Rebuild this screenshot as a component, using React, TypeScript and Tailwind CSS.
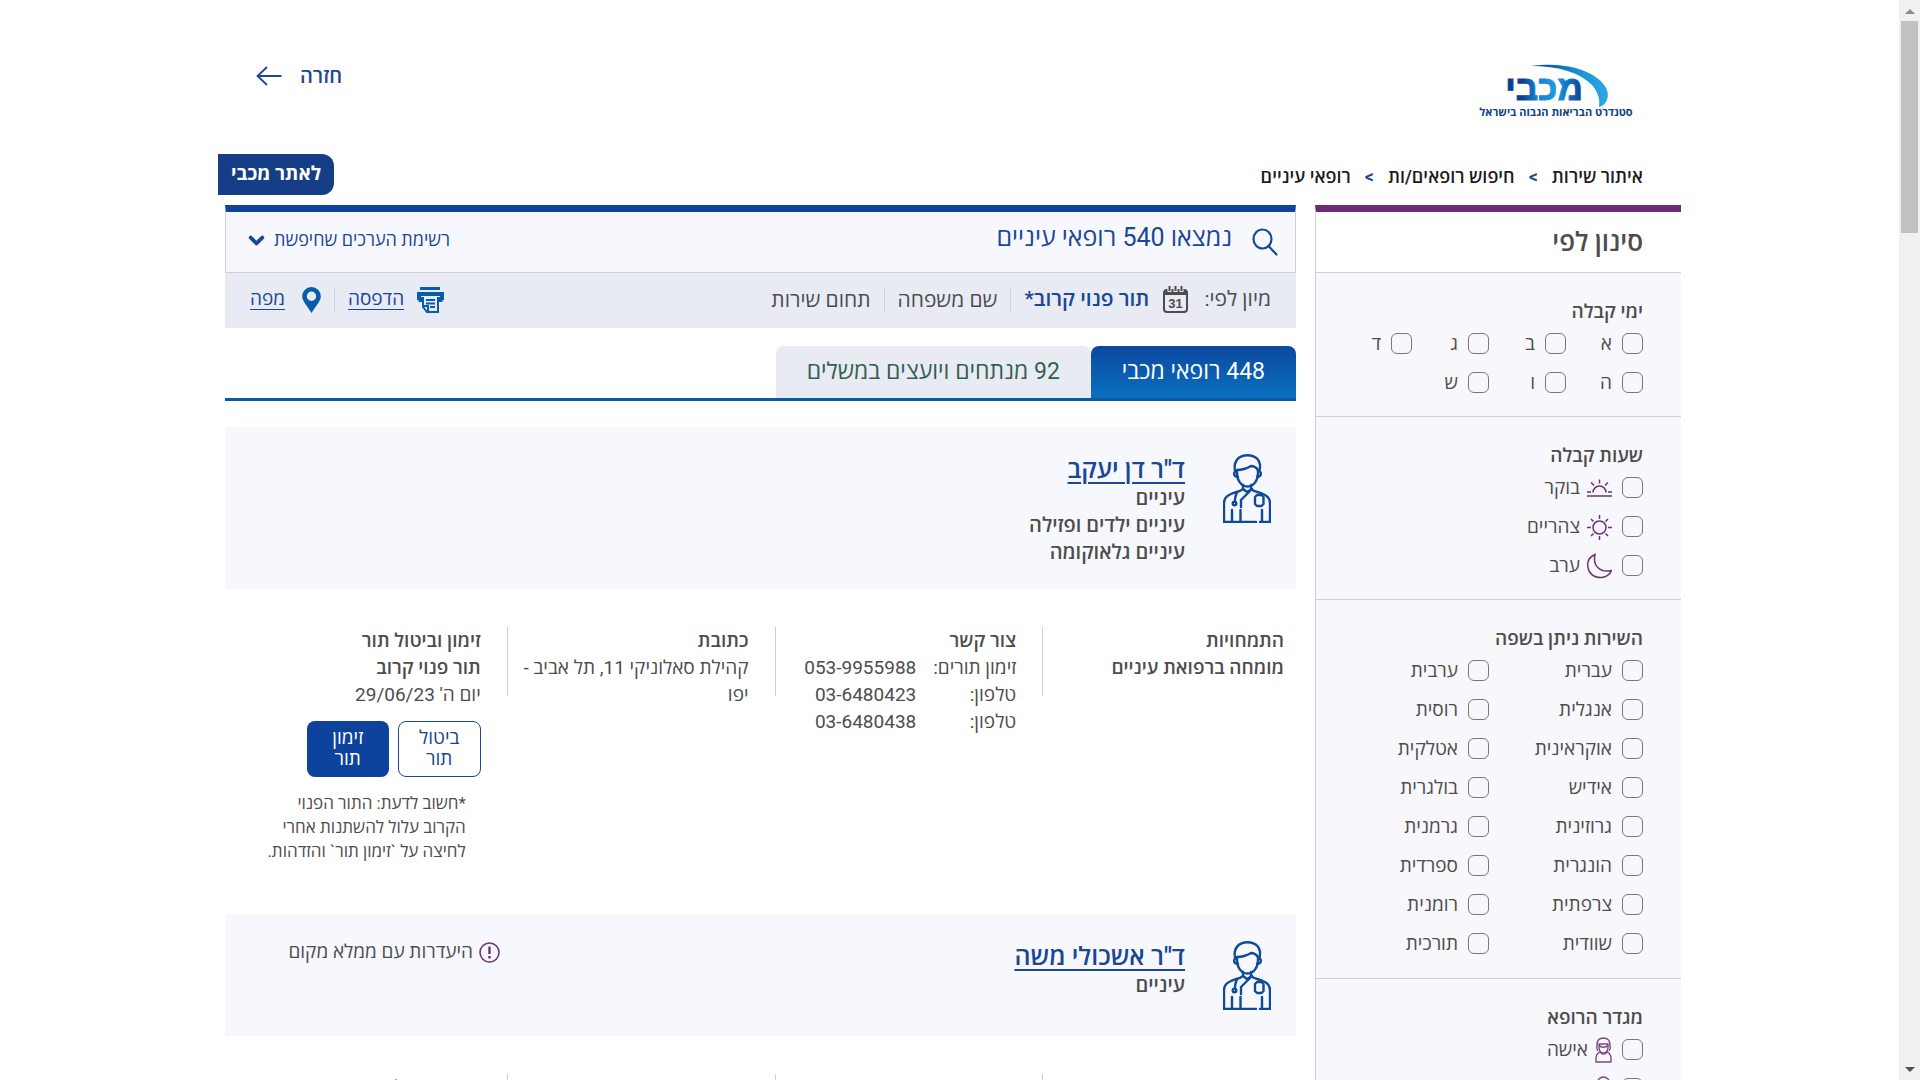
import { ChevronDown } from "lucide-react";
import type { ReactNode } from "react";

interface Doctor {
  name: string;
  fields: string[];
  absence?: string;
  expertise: string;
  phones: { label: string; number: string }[];
  address: string;
  nextDate: string;
}

const days = ["א", "ב", "ג", "ד", "ה", "ו", "ש"];

const languages = [
  "עברית",
  "ערבית",
  "אנגלית",
  "רוסית",
  "אוקראינית",
  "אטלקית",
  "אידיש",
  "בולגרית",
  "גרוזינית",
  "גרמנית",
  "הונגרית",
  "ספרדית",
  "צרפתית",
  "רומנית",
  "שוודית",
  "תורכית",
];

const doctors: Doctor[] = [
  {
    name: 'ד"ר דן יעקב',
    fields: ["עיניים", "עיניים ילדים ופזילה", "עיניים גלאוקומה"],
    expertise: "מומחה ברפואת עיניים",
    phones: [
      { label: "זימון תורים:", number: "053-9955988" },
      { label: "טלפון:", number: "03-6480423" },
      { label: "טלפון:", number: "03-6480438" },
    ],
    address: "קהילת סאלוניקי 11, תל אביב - יפו",
    nextDate: "יום ה' 29/06/23",
  },
  {
    name: 'ד"ר אשכולי משה',
    fields: ["עיניים"],
    absence: "היעדרות עם ממלא מקום",
    expertise: "מומחה ברפואת עיניים",
    phones: [{ label: "טלפון:", number: "03-6480423" }],
    address: "תל אביב - יפו",
    nextDate: "יום ה' 29/06/23",
  },
];

function Logo() {
  return (
    <svg width="152" height="60" viewBox="0 0 152 60" className="overflow-visible" role="img" aria-label="מכבי">
      <defs>
        <linearGradient id="swoosh" x1="0" x2="1" y1="0" y2="0">
          <stop offset="0" stopColor="#0b3f8f" />
          <stop offset="0.6" stopColor="#1a8fd3" />
          <stop offset="1" stopColor="#2ba9e6" />
        </linearGradient>
        <linearGradient id="word" x1="0" x2="1" y1="0" y2="0">
          <stop offset="0" stopColor="#0b3f8f" />
          <stop offset="0.22" stopColor="#0b3f8f" />
          <stop offset="0.4" stopColor="#1580cc" />
          <stop offset="0.65" stopColor="#1d9be0" />
          <stop offset="0.8" stopColor="#1276c2" />
          <stop offset="1" stopColor="#0b3f8f" />
        </linearGradient>
      </defs>
      <path
        d="M51 6C78 2 103 7 117 18c11 8 13 17 9 24-2 3-4 4-7 5 1-6 0-14-7-22C99 12 78 6 51 6z"
        fill="url(#swoosh)"
      />
      <text
        x="64"
        y="40"
        textAnchor="middle"
        fill="url(#word)"
        stroke="url(#word)"
        strokeWidth="1"
        className="font-['Liberation_Sans'] text-[35px] font-bold"
      >
        מכבי
      </text>
      <text
        x="76"
        y="56"
        textAnchor="middle"
        fill="#123f86"
        className="font-['Open_Sans'] text-[11px] font-bold"
      >
        סטנדרט הבריאות הגבוה בישראל
      </text>
    </svg>
  );
}

function SearchIcon() {
  return (
    <svg
      width="26"
      height="28"
      viewBox="0 0 26 28"
      fill="none"
      stroke="#1a4796"
      strokeWidth="2.200"
      strokeLinecap="round"
      aria-hidden="true"
    >
      <ellipse cx="10.500" cy="11" rx="9" ry="9.500" />
      <path d="M16.500 18l8 8.500" />
    </svg>
  );
}

function DoctorIcon() {
  return (
    <svg
      width="48"
      height="69"
      viewBox="0 0 48 69"
      fill="none"
      stroke="#0f4a9a"
      strokeWidth="2.400"
      strokeLinecap="round"
      strokeLinejoin="round"
      className="shrink-0"
      aria-hidden="true"
    >
      <path d="M12 17C10 7 16 1.200 24.500 1.200S39 7 36.500 17" />
      <path d="M14 19v-3c5 0 9-1 14-4 3 0 5 1 7 4v3c0 7-4 13.500-10.500 13.500S14 26 14 19z" />
      <path d="M14 17c-4 0-4 6 1 6M35 17c4 0 4 6-1 6" />
      <path d="M20 31v4c-3 3-8 3-12 5-5 2-7 5-7 9v19h32M37 68h10V49c0-4-2-7-7-9-4-2-9-2-12-5v-4" />
      <path d="M20 35l4 3 5-3M27 37l-9 9v7M14 38c-1 3-2 5-2 8" />
      <circle cx="11.500" cy="49.500" r="1.800" />
      <path d="M34 41h4.500l2 2v7l-2 2H34l-2-2v-7z" />
      <path d="M9 56v12M17.500 56v12M39 56v12" />
    </svg>
  );
}

function CalendarIcon() {
  return (
    <svg width="25" height="28" viewBox="0 0 25 28" aria-hidden="true">
      <path
        d="M4 4h17a3 3 0 0 1 3 3v16a3 3 0 0 1-3 3H4a3 3 0 0 1-3-3V7a3 3 0 0 1 3-3z"
        fill="none"
        stroke="#4d4d4d"
        strokeWidth="2"
      />
      <path d="M1 9V6l3-3h17l3 3v3z" fill="#4d4d4d" />
      <path d="M6.500 1v5M12.500 1v5M18.500 1v5" stroke="#e8ebf3" strokeWidth="4" />
      <path d="M6.500 0v5M12.500 0v5M18.500 0v5" stroke="#4d4d4d" strokeWidth="2" />
      <text
        x="12.500"
        y="22"
        textAnchor="middle"
        fill="#4d4d4d"
        className="font-['Liberation_Sans'] text-[13px] font-bold"
      >
        31
      </text>
    </svg>
  );
}

function PrinterIcon() {
  return (
    <svg width="27" height="26" viewBox="0 0 27 26" fill="none" stroke="#0a5ca8" aria-hidden="true">
      <path d="M3 1.500h20" strokeWidth="3" />
      <path d="M0 5h27v8h-4V9H4v4H0z" fill="#0a5ca8" stroke="none" />
      <path d="M5 10v4H1.500M22 10v4h3.500" strokeWidth="2" />
      <path d="M6 10v10l4 5h11V10" strokeWidth="2" />
      <path d="M9 13h9M9 16.500h9M13 20h5" strokeWidth="2" />
      <path d="M6 19h5v5" strokeWidth="2" />
    </svg>
  );
}

function PinIcon() {
  return (
    <svg width="19" height="26" viewBox="0 0 19 26" aria-hidden="true">
      <path
        fillRule="evenodd"
        fill="#0a5ca8"
        d="M9.500 0a9.200 9.200 0 0 1 9.300 9.300c0 5-5.300 10-9.300 16.700C5.500 19.300.2 14.300.2 9.300A9.200 9.200 0 0 1 9.500 0zm0 4.500a4.700 4.700 0 1 0 0 9.400 4.700 4.700 0 0 0 0-9.400z"
      />
    </svg>
  );
}

function BackArrow() {
  return (
    <svg width="26" height="20" viewBox="0 0 26 20" fill="none" stroke="#1a4796" strokeWidth="1.800" aria-hidden="true">
      <path d="M25.500 10H1.500M11 1L1.500 10l9.500 9" />
    </svg>
  );
}

function PurpleIcon({ children }: { children: ReactNode }) {
  return (
    <svg
      width="25"
      height="26"
      viewBox="0 0 25 26"
      fill="none"
      stroke="#6a3572"
      strokeWidth="1.500"
      aria-hidden="true"
    >
      {children}
    </svg>
  );
}

const morningIcon = (
  <PurpleIcon>
    <path d="M0 21h25M0 17h4M21 17h4M6 17.500a6.500 6.500 0 0 1 13 0M12.500 4.500v4M4 7.500l3 3M21 7.500l-3 3" />
  </PurpleIcon>
);

const noonIcon = (
  <PurpleIcon>
    <circle cx="12.500" cy="13.500" r="6.500" />
    <path d="M12.500 1v4M12.500 22v4M0 13.500h4M21 13.500h4M4 5l2.500 2.500M21 5l-2.500 2.500M4 22l2.500-2.500M21 22l-2.500-2.500" />
  </PurpleIcon>
);

const eveningIcon = (
  <PurpleIcon>
    <path d="M8 1.500C2 4 0 9 1 14.500c1.500 8 9 11.500 16 9.500 3.500-1 6-3 7.500-6.500C13 20 5.500 13 8 1.500z" />
  </PurpleIcon>
);

const womanIcon = (
  <svg width="17" height="26" viewBox="0 0 17 26" fill="none" stroke="#7a4a85" strokeWidth="1.400" aria-hidden="true">
    <path d="M3 14c-2-2-1-3-1-6 0-4 2-7 6.500-7S15 4 15 8c0 3 1 4-1 6" />
    <path d="M4 7h9v3c0 4-2 6-4.500 6S4 14 4 10z" />
    <path d="M4 8c2 3 7 3 9 0M5.500 14.500C6 18 11 18 11.500 14.500" />
    <path d="M1 25v-4c0-4 3-6 5-6M16 25v-4c0-4-3-6-5-6M.5 25h16" />
  </svg>
);

const manIcon = (
  <svg width="17" height="26" viewBox="0 0 17 26" fill="none" stroke="#7a4a85" strokeWidth="1.400" aria-hidden="true">
    <circle cx="8.500" cy="7" r="6" />
    <path d="M1 25v-4c0-4 3-6 5-6M16 25v-4c0-4-3-6-5-6M.5 25h16" />
  </svg>
);

function CheckItem({ label, icon }: { label: string; icon?: ReactNode }) {
  return (
    <label className="flex h-[39px] items-center gap-[7px] text-[19px]">
      <input
        type="checkbox"
        className="ml-[3px] size-[21px] shrink-0 appearance-none rounded-md border border-[#77777f] checked:bg-[#6d2a77]"
      />
      {icon}
      <span className="pt-0.5">{label}</span>
    </label>
  );
}

function FilterSection({ title, children }: { title: string; children: ReactNode }) {
  return (
    <fieldset className="border-b border-[#cfcfd6] pt-[26px] pr-[38px] pb-[14px]">
      <legend className="float-right w-full text-[19px] leading-[25px] font-semibold">{title}</legend>
      <div className="clear-both">{children}</div>
    </fieldset>
  );
}

function Filters() {
  return (
    <aside className="w-[366px] shrink-0 border-t-[7px] border-l border-t-[#6d2a77] border-l-[#cfcfd6] bg-[#f7f7fc]">
      <h2 className="h-[61px] border-b border-[#cfcfd6] bg-white pt-3 pr-[38px] text-[26px] leading-9 font-semibold">
        סינון לפי
      </h2>
      <FilterSection title="ימי קבלה">
        <div className="grid grid-cols-[repeat(4,77px)]">
          {days.map((day) => (
            <CheckItem key={day} label={day} />
          ))}
        </div>
      </FilterSection>
      <FilterSection title="שעות קבלה">
        <CheckItem label="בוקר" icon={morningIcon} />
        <CheckItem label="צהריים" icon={noonIcon} />
        <CheckItem label="ערב" icon={eveningIcon} />
      </FilterSection>
      <FilterSection title="השירות ניתן בשפה">
        <div className="grid grid-cols-[repeat(2,154px)] pb-px">
          {languages.map((language) => (
            <CheckItem key={language} label={language} />
          ))}
        </div>
      </FilterSection>
      <FilterSection title="מגדר הרופא">
        <CheckItem label="אישה" icon={womanIcon} />
        <CheckItem label="גבר" icon={manIcon} />
      </FilterSection>
    </aside>
  );
}

function Column({ title, last, children }: { title: string; last?: boolean; children: ReactNode }) {
  return (
    <div className="flex w-1/4 pr-3">
      <div className="min-w-0 flex-1">
        <h4 className="font-semibold">{title}</h4>
        {children}
      </div>
      <div className={last ? "w-[14px]" : "ml-[14px] h-[69px] w-px bg-[#cfcfcf]"} />
    </div>
  );
}

function DoctorCard({ doctor }: { doctor: Doctor }) {
  return (
    <article className="mb-[51px]">
      <div className="flex min-h-[122px] bg-[#f7f8fd] pt-[27px] pr-[25px] pb-[23px]">
        <DoctorIcon />
        <div className="mr-[38px] flex-1 text-xl leading-[27px] font-semibold">
          <h3 className="text-[25px] leading-[31px]">
            <a href="#doctor" className="text-[#1a4796] underline decoration-2 underline-offset-4">
              {doctor.name}
            </a>
          </h3>
          {doctor.fields.map((field) => (
            <p key={field}>{field}</p>
          ))}
        </div>
        {doctor.absence && (
          <p className="flex w-[275px] items-start gap-[6px] text-[19px] leading-[22px]">
            <svg width="21" height="22" viewBox="0 0 21 22" fill="none" stroke="#6a3572" aria-hidden="true">
              <circle cx="10.500" cy="11.500" r="9.500" strokeWidth="1.600" />
              <path d="M10.500 5.500V13M10.500 15v2.500" strokeWidth="2.400" />
            </svg>
            {doctor.absence}
          </p>
        )}
      </div>

      <div className="mt-[38px] flex text-[19px] leading-[27px]">
        <Column title="התמחויות">
          <p className="font-semibold">{doctor.expertise}</p>
        </Column>
        <Column title="צור קשר">
          {doctor.phones.map((phone) => (
            <p key={phone.number} className="flex">
              <span className="w-[100px]">{phone.label}</span>
              <span dir="ltr">{phone.number}</span>
            </p>
          ))}
        </Column>
        <Column title="כתובת">
          <p>{doctor.address}</p>
        </Column>
        <Column title="זימון וביטול תור" last>
          <p className="font-semibold">תור פנוי קרוב</p>
          <p>{doctor.nextDate}</p>
          <div className="mt-[13px] flex gap-[9px] leading-[21px]">
            <button className="h-14 w-[83px] rounded-lg border border-[#1a4796] bg-white px-4 pb-0.5 text-[#1a4796]">
              ביטול תור
            </button>
            <button className="h-14 w-[82px] rounded-lg bg-[#0d439c] px-4 pb-0.5 text-white">
              זימון תור
            </button>
          </div>
          <p className="mt-[14px] mr-[15px] w-[210px] text-[17px] leading-6">
            *חשוב לדעת: התור הפנוי הקרוב עלול להשתנות אחרי לחיצה על `זימון תור` והזדהות.
          </p>
        </Column>
      </div>
    </article>
  );
}

function Results() {
  return (
    <main className="min-w-0 flex-1">
      <div className="flex h-[68px] items-center border border-t-[7px] border-[#cfcfd6] border-t-[#0f449c] bg-[#f7f8fd] pr-[17px] pl-[19px] text-[#1a4796]">
        <SearchIcon />
        <h1 className="mr-5 pb-2 text-[25px]">נמצאו 540 רופאי עיניים</h1>
        <button className="mr-auto flex items-center gap-[6px] pb-1 text-lg">
          רשימת הערכים שחיפשת
          <ChevronDown size={23} strokeWidth={4} />
        </button>
      </div>

      <div className="flex h-[55px] items-center bg-[#e8ebf3] pr-[25px] pb-0.5 pl-[25px] text-[21px]">
        <span>מיון לפי:</span>
        <span className="mr-[16px] ml-[14px]">
          <CalendarIcon />
        </span>
        <button className="font-semibold text-[#1a4796]">תור פנוי קרוב*</button>
        <button className="mr-[13px] border-r border-[#cfd2da] pr-[13px] leading-6">שם משפחה</button>
        <button className="mr-[13px] border-r border-[#cfd2da] pr-[13px] leading-6">תחום שירות</button>
        <div className="mr-auto flex items-center text-[19px] text-[#1a4796]">
          <PrinterIcon />
          <a href="#print" className="mr-[13px] underline underline-offset-4">
            הדפסה
          </a>
          <span className="mx-[13px] h-6 w-px bg-[#cfd2da]" />
          <PinIcon />
          <a href="#map" className="mr-[17px] underline underline-offset-4">
            מפה
          </a>
        </div>
      </div>

      <div className="mt-[18px] mb-[26px] flex h-[55px] border-b-[3px] border-[#0d5aa3] text-[23px]">
        <button className="rounded-t-lg bg-linear-to-b from-[#0c489f] to-[#0b70c0] px-[31px] text-white">
          448 רופאי מכבי
        </button>
        <button className="rounded-t-lg bg-[#e8ebf2] px-[31px] text-[#335f52]">
          92 מנתחים ויועצים במשלים
        </button>
      </div>

      {doctors.map((doctor) => (
        <DoctorCard key={doctor.name} doctor={doctor} />
      ))}
    </main>
  );
}

function Scrollbar() {
  return (
    <div className="flex w-[21px] shrink-0 flex-col items-center bg-[#f1f1f1]" aria-hidden="true">
      <svg width="20" height="21" viewBox="0 0 20 21">
        <path d="M5 14l5-5 5 5z" fill="#8b8b8b" />
      </svg>
      <div className="h-[212px] w-[17px] bg-[#c1c1c1]" />
      <svg width="20" height="21" viewBox="0 0 20 21" className="mt-auto">
        <path d="M5 8l5 5 5-5z" fill="#505050" />
      </svg>
    </div>
  );
}

export default function App() {
  return (
    <div
      dir="ltr"
      className="flex h-screen overflow-hidden bg-white font-[Roboto,'Open_Sans',sans-serif] text-[#4d4d4d]"
    >
      <div dir="rtl" className="min-w-0 flex-1">
        <div className="mx-auto max-w-[1463px]">
          <header className="flex items-start justify-between pt-[60px] pr-[49px] pb-[34px] pl-[38px]">
            <Logo />
            <a href="#back" className="flex h-8 items-center gap-[18px] text-xl font-semibold text-[#1a4796]">
              חזרה
              <BackArrow />
            </a>
          </header>

          <div className="mb-[10px] flex items-center justify-between">
            <nav className="flex gap-[14px] pt-1 pr-[38px] text-lg font-semibold text-[#1c1c1c]">
              <a href="#services">איתור שירות</a>
              <span className="text-[#1a4796]">&gt;</span>
              <a href="#doctors">חיפוש רופאים/ות</a>
              <span className="text-[#1a4796]">&gt;</span>
              <span>רופאי עיניים</span>
            </nav>
            <a
              href="#maccabi"
              className="flex h-[41px] items-center rounded-r-xl bg-[#163e86] px-[13px] text-[19px] font-bold text-white"
            >
              לאתר מכבי
            </a>
          </div>

          <div className="flex gap-[19px] pl-[7px]">
            <Filters />
            <Results />
          </div>
        </div>
      </div>
      <Scrollbar />
    </div>
  );
}
